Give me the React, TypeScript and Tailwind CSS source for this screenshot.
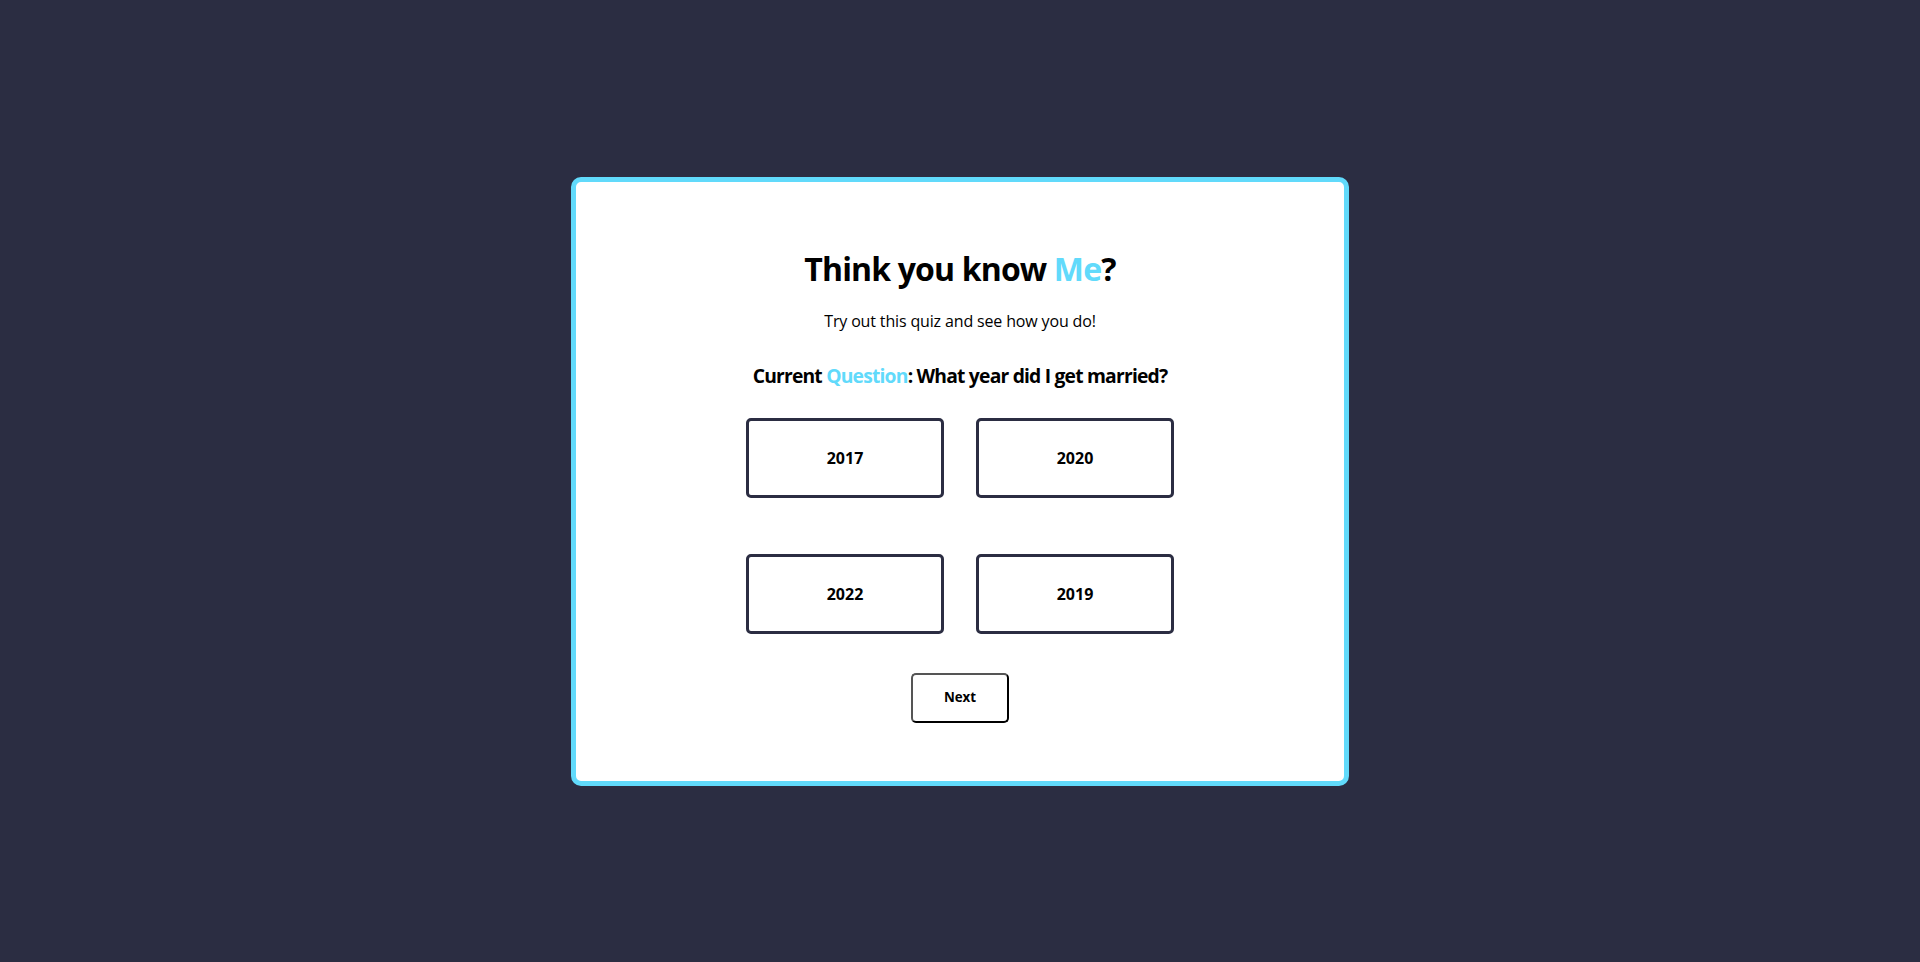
import React from "react";

const answers = ["2017", "2020", "2022", "2019"];

export default function App() {
  return (
    <div
      className="min-h-screen w-full bg-[#2b2d42] flex items-center justify-center"
      style={{ fontFamily: '"Open Sans", "Noto Sans", sans-serif' }}
    >
      <div className="w-[778px] bg-white border-[5px] border-[#61dafb] rounded-[10px] flex flex-col items-center pt-[67px] pb-[58px]">
        <h1 className="text-[32px] leading-[40px] font-bold text-black tracking-[-0.85px]">
          Think you know <span className="text-[#61dafb]">Me</span>?
        </h1>
        <p className="mt-[20px] text-[16px] leading-[24px] text-black tracking-[-0.15px]">
          Try out this quiz and see how you do!
        </p>
        <h2 className="mt-[29px] text-[19.3px] leading-[28px] font-bold text-black tracking-[-0.8px]">
          Current <span className="text-[#61dafb]">Question</span>: What year did I get married?
        </h2>
        <div className="mt-[28px] grid grid-cols-2 gap-x-[32px] gap-y-[56px]">
          {answers.map((a) => (
            <button
              key={a}
              className="w-[198px] h-[80px] border-[3px] border-[#2b2d42] rounded-[5px] bg-white text-[16px] font-bold text-black flex items-center justify-center"
            >
              {a}
            </button>
          ))}
        </div>
        <button className="mt-[39px] w-[98px] h-[50px] bg-white border-2 border-t-[#555] border-l-[#555] border-r-black border-b-black rounded-[5px] text-[13.33px] font-bold text-black">
          Next
        </button>
      </div>
    </div>
  );
}
